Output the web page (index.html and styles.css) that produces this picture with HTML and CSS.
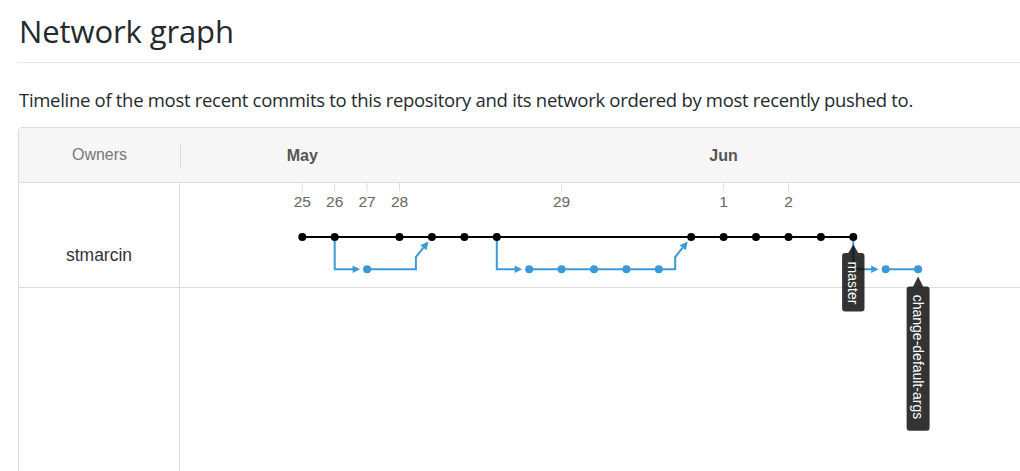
FILE: index.html
```html
<!DOCTYPE html>
<html>
<head>
<meta charset="utf-8">
<link rel="stylesheet" href="styles.css">
</head>
<body>
<div class="page">
  <div class="subhead">
    <h1 class="title">Network graph</h1>
  </div>
  <p class="lead">Timeline of the most recent commits to this repository and its network ordered by most recently pushed to.</p>
  <div class="network">
    <div class="net-head">
      <div class="owners-h">Owners</div>
      <div class="months"></div>
    </div>
    <div class="net-row">
      <div class="owner">stmarcin</div>
      <div class="lane"></div>
    </div>
    <div class="net-row filler">
      <div class="owner"></div>
      <div class="lane"></div>
    </div>
    <svg class="canvas" width="1002" height="344" viewBox="18 127 1002 344" xmlns="http://www.w3.org/2000/svg">
      <g class="month">
        <text x="302.3" y="161" text-anchor="middle">May</text>
        <text x="723.6" y="161" text-anchor="middle">Jun</text>
      </g>
      <g stroke="#dddddd" stroke-width="1">
        <line x1="302.3" y1="183" x2="302.3" y2="191"/>
        <line x1="334.7" y1="183" x2="334.7" y2="191"/>
        <line x1="367.1" y1="183" x2="367.1" y2="191"/>
        <line x1="399.5" y1="183" x2="399.5" y2="191"/>
        <line x1="561.6" y1="183" x2="561.6" y2="191"/>
        <line x1="723.6" y1="183" x2="723.6" y2="191"/>
        <line x1="788.5" y1="183" x2="788.5" y2="191"/>
      </g>
      <g class="day" text-anchor="middle">
        <text x="302.3" y="207">25</text>
        <text x="334.7" y="207">26</text>
        <text x="367.1" y="207">27</text>
        <text x="399.5" y="207">28</text>
        <text x="561.6" y="207">29</text>
        <text x="723.6" y="207">1</text>
        <text x="788.5" y="207">2</text>
      </g>

      <!-- blue branches -->
      <g stroke="#3a9ad9" stroke-width="2" fill="none">
        <path d="M334.7 237 V269.3 H354"/>
        <path d="M367.1 269.3 H415.9 V257 L423.4 247.7"/>
        <path d="M496.8 237 V269.3 H516"/>
        <path d="M529.2 269.3 H675.2 V257 L682.7 247.7"/>
        <path d="M853.3 237 V269.3 H872"/>
        <path d="M885.7 269.3 H918.1"/>
      </g>
      <g fill="#3a9ad9">
        <polygon points="352.6,265.5 360.1,269.3 352.6,273.1"/>
        <polygon points="514.7,265.5 522.2,269.3 514.7,273.1"/>
        <polygon points="871.2,265.5 878.7,269.3 871.2,273.1"/>
        <polygon points="428.4,241.5 426.5,250.2 420.3,245.2"/>
        <polygon points="687.7,241.5 685.8,250.2 679.6,245.2"/>
        <circle cx="367.1" cy="269.3" r="4"/>
        <circle cx="529.2" cy="269.3" r="4"/>
        <circle cx="561.6" cy="269.3" r="4"/>
        <circle cx="594.0" cy="269.3" r="4"/>
        <circle cx="626.4" cy="269.3" r="4"/>
        <circle cx="658.8" cy="269.3" r="4"/>
        <circle cx="885.7" cy="269.3" r="4"/>
        <circle cx="918.1" cy="269.3" r="4"/>
      </g>

      <!-- master line -->
      <line x1="302.3" y1="237" x2="853.3" y2="237" stroke="#000" stroke-width="2"/>
      <g fill="#000">
        <circle cx="302.3" cy="237" r="4"/>
        <circle cx="334.7" cy="237" r="4"/>
        <circle cx="399.5" cy="237" r="4"/>
        <circle cx="431.9" cy="237" r="4"/>
        <circle cx="464.4" cy="237" r="4"/>
        <circle cx="496.8" cy="237" r="4"/>
        <circle cx="691.2" cy="237" r="4"/>
        <circle cx="723.6" cy="237" r="4"/>
        <circle cx="756.0" cy="237" r="4"/>
        <circle cx="788.5" cy="237" r="4"/>
        <circle cx="820.9" cy="237" r="4"/>
        <circle cx="853.3" cy="237" r="4"/>
      </g>

      <!-- labels -->
      <g class="tag">
        <path d="M853.3 244.5 L858.3 253 H861.5 Q864.5 253 864.5 256 V308.5 Q864.5 311.5 861.5 311.5 H845.1 Q842.1 311.5 842.1 308.5 V256 Q842.1 253 845.1 253 H848.3 Z"/>
        <text x="853.3" y="283" transform="rotate(90 853.3 283)" text-anchor="middle" dominant-baseline="central">master</text>
      </g>
      <g class="tag">
        <path d="M918.1 276.5 L923.1 286.5 H926.6 Q929.6 286.5 929.6 289.5 V427.7 Q929.6 430.7 926.6 430.7 H909.6 Q906.6 430.7 906.6 427.7 V289.5 Q906.6 286.5 909.6 286.5 H913.1 Z"/>
        <text x="918.1" y="357" transform="rotate(90 918.1 357)" text-anchor="middle" dominant-baseline="central">change-default-args</text>
      </g>
    </svg>
  </div>
</div>
</body>
</html>
```

FILE: styles.css
```css
html, body {
  margin: 0;
  padding: 0;
  background: #ffffff;
  overflow: hidden;
}

.page {
  padding-left: 18px;
  width: 1002px;
  height: 471px;
  overflow: hidden;
  font-family: "Open Sans", "Noto Sans", "Liberation Sans", sans-serif;
  color: #24292e;
}

.subhead {
  border-bottom: 1px solid #e1e4e8;
  padding-top: 12px;
  padding-bottom: 12px;
  width: 1100px;
}

.title {
  margin: 0;
  font-size: 31px;
  font-weight: 400;
  line-height: 38px;
  letter-spacing: -0.1px;
  padding-left: 1px;
}

.lead {
  margin: 25px 0 15px 1px;
  font-size: 18.5px;
  letter-spacing: -0.3px;
  line-height: 24px;
}

.network {
  position: relative;
  width: 1100px;
  height: 400px;
  border: 1px solid #dddddd;
  border-radius: 4px 0 0 0;
  display: flex;
  flex-direction: column;
  font-family: "Liberation Sans", Arial, sans-serif;
}

.net-head {
  height: 54px;
  background: #f6f6f6;
  border-bottom: 1px solid #dddddd;
  border-radius: 4px 0 0 0;
  display: flex;
  align-items: center;
}

.owners-h {
  width: 161px;
  height: 25px;
  border-right: 1px solid #dddddd;
  display: flex;
  align-items: center;
  justify-content: center;
  font-size: 16px;
  color: #777777;
}

.net-row {
  display: flex;
  height: 104px;
  border-bottom: 1px solid #dddddd;
}

.net-row.filler {
  flex: 1;
  border-bottom: none;
}

.owner {
  width: 161px;
  border-right: 1px solid #dddddd;
  display: flex;
  justify-content: center;
  padding-top: 62px;
  box-sizing: border-box;
  font-size: 17.5px;
  color: #333333;
}

.lane {
  flex: 1;
}

.canvas {
  position: absolute;
  left: -1px;
  top: -1px;
  pointer-events: none;
  overflow: visible;
}

.month text {
  font-family: "Liberation Sans", Arial, sans-serif;
  font-size: 16px;
  font-weight: 700;
  fill: #555555;
}

.day text {
  font-family: "Liberation Sans", Arial, sans-serif;
  font-size: 15.5px;
  fill: #666666;
}

.tag path {
  fill: #000000;
  fill-opacity: 0.8;
}

.tag text {
  font-family: "Liberation Sans", Arial, sans-serif;
  font-size: 14px;
  fill: #ffffff;
}
```
